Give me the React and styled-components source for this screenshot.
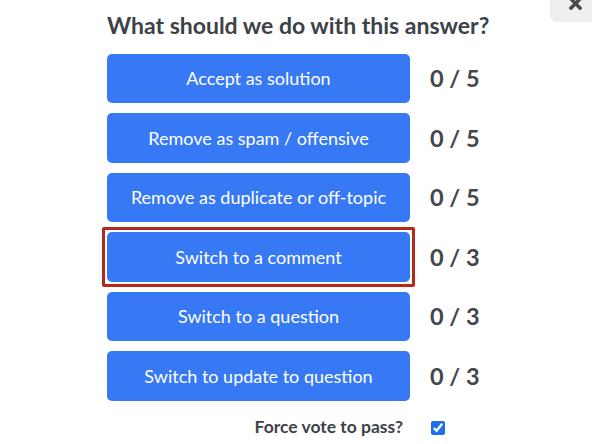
import React from 'react';
import styled, { createGlobalStyle } from 'styled-components';
import { FaTimes } from 'react-icons/fa';

const GlobalStyle = createGlobalStyle`
  html, body {
    margin: 0;
    padding: 0;
    background: #ffffff;
  }
  body {
    font-family: Lato, "Noto Sans", sans-serif;
    width: 592px;
    height: 444px;
    overflow: hidden;
  }
`;

const Modal = styled.div`
  position: relative;
  width: 592px;
  height: 444px;
  padding: 12px 0 0 107px;
  box-sizing: border-box;
`;

const CloseButton = styled.button`
  position: absolute;
  top: -20px;
  right: -8px;
  width: 50px;
  height: 42px;
  border: none;
  border-radius: 7px;
  background: #eeeeee;
  color: #4a4a4a;
  display: flex;
  align-items: flex-end;
  justify-content: center;
  padding: 0 0 9px 0;
  box-sizing: border-box;
`;

const Title = styled.h2`
  margin: 0 0 14px 0;
  font-size: 23px;
  line-height: 1.2;
  font-weight: 700;
  color: #3d4148;
  white-space: nowrap;
`;

const VoteGrid = styled.div`
  display: grid;
  grid-template-columns: 303px auto;
  column-gap: 20px;
  row-gap: 10px;
  align-items: center;
  justify-items: start;
`;

const ActionButton = styled.button`
  position: relative;
  width: 303px;
  height: 49.5px;
  border: none;
  border-radius: 5px;
  background: #3779f5;
  color: #ffffff;
  font-family: Lato, "Noto Sans", sans-serif;
  font-size: 18px;
  font-weight: 400;
  text-align: center;
  padding: 0;

  &::after {
    content: '';
    display: ${p => (p.$highlight ? 'block' : 'none')};
    position: absolute;
    inset: -5px;
    border: 3px solid #b5281a;
    border-radius: 2px;
  }
`;

const Count = styled.span`
  font-size: 23.5px;
  font-weight: 700;
  color: #43464c;
`;

const ForceLabel = styled.label`
  justify-self: end;
  margin: 5px 7px 0 0;
  font-size: 17.5px;
  line-height: 1.2;
  font-weight: 700;
  color: #3d4148;
`;

const Check = styled.input`
  margin: 8px 0 0 1px;
  width: 14px;
  height: 14px;
  accent-color: #1f6fe6;
`;

const actions = [
  { label: 'Accept as solution', count: '0 / 5' },
  { label: 'Remove as spam / offensive', count: '0 / 5' },
  { label: 'Remove as duplicate or off-topic', count: '0 / 5' },
  { label: 'Switch to a comment', count: '0 / 3', highlight: true },
  { label: 'Switch to a question', count: '0 / 3' },
  { label: 'Switch to update to question', count: '0 / 3' },
];

export default function App() {
  return (
    <>
      <GlobalStyle />
      <Modal>
        <CloseButton aria-label="Close">
          <FaTimes size={19} />
        </CloseButton>
        <Title>What should we do with this answer?</Title>
        <VoteGrid>
          {actions.map(a => (
            <React.Fragment key={a.label}>
              <ActionButton $highlight={a.highlight}>{a.label}</ActionButton>
              <Count>{a.count}</Count>
            </React.Fragment>
          ))}
          <ForceLabel htmlFor="force">Force vote to pass?</ForceLabel>
          <Check id="force" type="checkbox" defaultChecked />
        </VoteGrid>
      </Modal>
    </>
  );
}
